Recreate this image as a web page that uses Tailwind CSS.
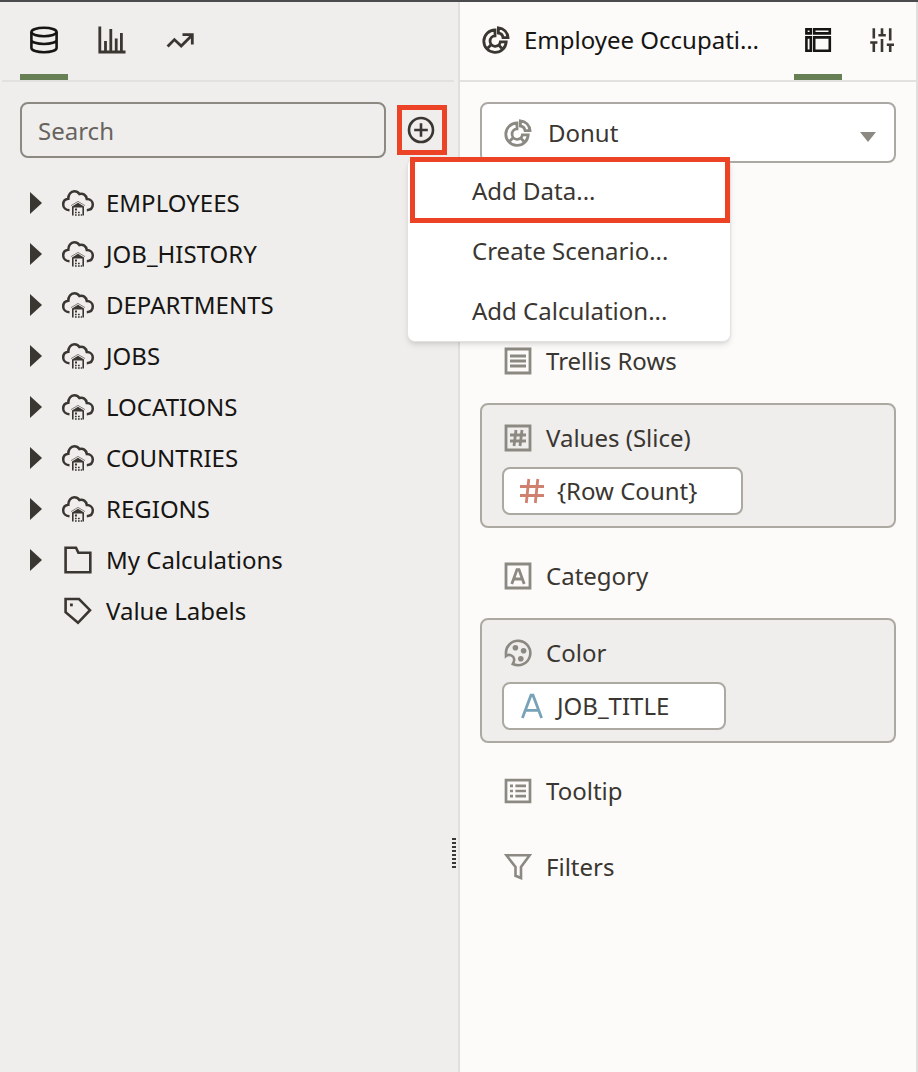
<!DOCTYPE html>
<html lang="en">
<head>
<meta charset="utf-8">
<title>Employee Occupations</title>
<script src="https://cdn.jsdelivr.net/npm/@tailwindcss/browser@4"></script>
</head>
<body class="min-h-screen bg-[#fcfbf9] text-[#161513] text-[24px] leading-8 font-['Noto_Sans','Open_Sans',sans-serif]">

<svg class="hidden" aria-hidden="true">
  <symbol id="donut" viewBox="0 0 28 28">
    <g fill="none" stroke="currentColor" stroke-width="2.8">
      <path d="M13 4A11.200 11.200 0 1 0 24.200 15.800H18.400A5.200 5.200 0 1 1 13 9.900Z"/>
      <path d="M16.400 1.800A10.300 10.300 0 0 1 26 11.600H21A5.400 5.400 0 0 0 16.400 7Z"/>
      <path d="M5.600 22.200 9.400 18.400M16.400 18.800 20 22.400"/>
    </g>
  </symbol>
  <symbol id="cloud" viewBox="0 0 34 28">
    <path d="M8.500 21.200C4.500 21 2.200 18.400 2.200 15.400C2.200 12.400 4.300 10.200 7.300 9.800C7.200 5.500 9.800 2.300 13.300 2.300C15.600 2.300 17.200 3.300 18.400 5C22 4 25.300 6 25.800 10C29.300 10 31.800 12.300 31.800 15.500C31.800 18.600 29.600 21 25.800 21.200" fill="none" stroke="currentColor" stroke-width="2.500"/>
    <path d="M10 16.600 17 12.400 24 16.600" fill="none" stroke="currentColor" stroke-width="1" stroke-opacity=".6"/>
    <path d="M11 17.400 17 13.800 23 17.400V26.500H21.400V18.400H12.600V26.500H11Z" fill="currentColor"/>
    <path d="M14 19.500h2v2h-2zM14 22.700h1.700v1.500h-1.700zM17 22.700h1.700v1.500H17zM14 25.200h1.700v1.500h-1.700zM17 25.200h1.700v1.500H17zM19.700 25.200h1.300v1.500h-1.300z" fill="currentColor"/>
  </symbol>
</svg>

<div class="flex min-h-screen border-t-2 border-[#4b4a4d]">

  <aside class="relative flex w-1/2 max-w-[460px] shrink-0 grow flex-col border-r-2 border-[#e1dfdd] bg-[#efeeec]">
    <nav class="mr-1 ml-0.5 flex h-20 items-stretch gap-5 border-b-2 border-[#e3e1df] pl-[18px]">
      <button aria-label="Data" class="flex w-12 justify-center border-b-[6px] border-[#677f54] pt-[6px]">
        <svg class="mt-[18px] size-7" viewBox="0 0 28 28" fill="none" stroke="currentColor" stroke-width="2.600"><ellipse cx="14" cy="6" rx="12.600" ry="4.200"/><path d="M1.400 6V22C1.400 24.400 7 26.200 14 26.200S26.600 24.400 26.600 22V6M1.400 14C1.400 16.300 7 18 14 18S26.600 16.300 26.600 14"/></svg>
      </button>
      <button aria-label="Visualizations" class="flex w-12 justify-center pt-6 text-[#3a3631]">
        <svg class="size-7" viewBox="0 0 28 28" fill="none" stroke="currentColor" stroke-width="2.800"><path d="M1.800 .5V26H27.500M7.500 26V15M12.800 26V3M18.200 26V12.500M23.400 26V7"/></svg>
      </button>
      <button aria-label="Analytics" class="flex w-12 justify-center pt-6 text-[#3a3631]">
        <svg class="size-7" viewBox="0 0 28 28" fill="none" stroke="currentColor" stroke-width="2.800"><path d="M1.600 20.600 8.400 13.600 15.200 20.100 25.500 9.800M16.500 8.600H26.300V18.400"/></svg>
      </button>
    </nav>

    <div class="mt-5 flex items-center pr-[11px] pl-5">
      <input type="text" aria-label="Search" placeholder="Search" class="h-14 min-w-0 flex-1 rounded-lg border-2 border-[#8b8982] bg-transparent px-4 placeholder:text-[#67645f]">
      <div class="relative ml-[11px]">
        <button aria-label="Add" class="flex size-[50px] items-center justify-center border-[5px] border-[#ec4226] pr-0.5 text-[#3a3631]">
          <svg class="size-7" viewBox="0 0 28 28" fill="none" stroke="currentColor" stroke-width="2.600"><circle cx="14" cy="14" r="12"/><path d="M14 7.200V20.800M7.200 14H20.800"/></svg>
        </button>
        <div role="menu" class="absolute top-[53px] left-[10px] z-10 w-[324px] rounded-lg border border-t-0 border-[#e4e2e0] bg-white pt-[3px] text-[#3a3631] shadow-md">
          <button role="menuitem" class="block h-[60px] w-full pl-16 text-left">Add Data...</button>
          <button role="menuitem" class="block h-[60px] w-full pl-16 text-left">Create Scenario...</button>
          <button role="menuitem" class="block h-[60px] w-full pl-16 text-left">Add Calculation...</button>
          <span class="pointer-events-none absolute -top-px right-0 left-0.5 h-[66px] border-[5px] border-[#ec4226]"></span>
        </div>
      </div>
    </div>

    <ul class="mt-[19px] pl-[30px] [&_li]:flex [&_li]:h-[51px] [&_li]:items-center [&_button]:flex [&_button]:items-center">
      <li><button><svg class="mr-[19px] h-[22px] w-3 text-[#3a3631]" viewBox="0 0 12 22"><path d="M0 0 12 11 0 22Z" fill="currentColor"/></svg><svg class="mr-[11px] h-7 w-[34px] text-[#3a3631]"><use href="#cloud"/></svg>EMPLOYEES</button></li>
      <li><button><svg class="mr-[19px] h-[22px] w-3 text-[#3a3631]" viewBox="0 0 12 22"><path d="M0 0 12 11 0 22Z" fill="currentColor"/></svg><svg class="mr-[11px] h-7 w-[34px] text-[#3a3631]"><use href="#cloud"/></svg>JOB_HISTORY</button></li>
      <li><button><svg class="mr-[19px] h-[22px] w-3 text-[#3a3631]" viewBox="0 0 12 22"><path d="M0 0 12 11 0 22Z" fill="currentColor"/></svg><svg class="mr-[11px] h-7 w-[34px] text-[#3a3631]"><use href="#cloud"/></svg>DEPARTMENTS</button></li>
      <li><button><svg class="mr-[19px] h-[22px] w-3 text-[#3a3631]" viewBox="0 0 12 22"><path d="M0 0 12 11 0 22Z" fill="currentColor"/></svg><svg class="mr-[11px] h-7 w-[34px] text-[#3a3631]"><use href="#cloud"/></svg>JOBS</button></li>
      <li><button><svg class="mr-[19px] h-[22px] w-3 text-[#3a3631]" viewBox="0 0 12 22"><path d="M0 0 12 11 0 22Z" fill="currentColor"/></svg><svg class="mr-[11px] h-7 w-[34px] text-[#3a3631]"><use href="#cloud"/></svg>LOCATIONS</button></li>
      <li><button><svg class="mr-[19px] h-[22px] w-3 text-[#3a3631]" viewBox="0 0 12 22"><path d="M0 0 12 11 0 22Z" fill="currentColor"/></svg><svg class="mr-[11px] h-7 w-[34px] text-[#3a3631]"><use href="#cloud"/></svg>COUNTRIES</button></li>
      <li><button><svg class="mr-[19px] h-[22px] w-3 text-[#3a3631]" viewBox="0 0 12 22"><path d="M0 0 12 11 0 22Z" fill="currentColor"/></svg><svg class="mr-[11px] h-7 w-[34px] text-[#3a3631]"><use href="#cloud"/></svg>REGIONS</button></li>
      <li><button><svg class="mr-[19px] h-[22px] w-3 text-[#3a3631]" viewBox="0 0 12 22"><path d="M0 0 12 11 0 22Z" fill="currentColor"/></svg><svg class="mr-[11px] h-7 w-[34px] text-[#3a3631]" viewBox="0 0 34 28"><path d="M4.600 1.800H15L17.400 6.800H29.300V26.200H4.600Z" fill="none" stroke="currentColor" stroke-width="2.600"/></svg>My Calculations</button></li>
      <li><button class="pl-[31px]"><svg class="mr-[11px] h-7 w-[34px] text-[#3a3631]" viewBox="0 0 34 28"><path d="M4.600 2H18L29 13.200 17 25.800 4.600 15.200Z" fill="none" stroke="currentColor" stroke-width="2.600"/><path d="M9 6.500h2.800v2.800H9z" fill="currentColor"/></svg>Value Labels</button></li>
    </ul>

    <div role="separator" aria-orientation="vertical" aria-label="Resize" class="absolute right-0.5 top-[836px] flex w-1 flex-col gap-0.5 [&_i]:h-0.5 [&_i]:bg-[#3a3631]"><i></i><i></i><i></i><i></i><i></i><i></i><i></i><i></i></div>
  </aside>

  <main class="flex min-w-0 flex-1 flex-col border-r-2 border-[#e1dfdd] text-[#3a3631]">
    <header class="flex h-20 border-b-2 border-[#e3e1df] pr-[10px] pl-[22px]">
      <svg class="mt-6 size-7 shrink-0"><use href="#donut"/></svg>
      <h1 class="mt-[22px] ml-[14px] flex-1 whitespace-nowrap text-[#161513]">Employee Occupati…</h1>
      <button aria-label="Grammar" class="flex w-12 shrink-0 justify-center border-b-[6px] border-[#677f54] pt-6 text-[#161513]">
        <svg class="size-7" viewBox="0 0 28 28" fill="none" stroke="currentColor" stroke-width="2.600"><path d="M2.400 3.200H6.800V7.400H2.400ZM10.200 3.200H25.800V7.400H10.200ZM2.400 11.400H6.800V24.800H2.400ZM10.200 11.400H25.800V24.800H10.200Z"/></svg>
      </button>
      <button aria-label="Properties" class="ml-4 flex w-12 shrink-0 justify-center pt-6">
        <svg class="size-7" viewBox="0 0 28 28" fill="none" stroke="currentColor" stroke-width="2.600"><path d="M5.800 2.200V12.500M5.800 16.500V26M2.200 16.500H9.400M14 2.200V9.300M10.400 9.300H17.800M14 13V26M22.200 2.200V14.500M18.800 18.700H26M22.200 18.700V26"/></svg>
      </button>
    </header>

    <div class="flex flex-col pt-5 pr-5 pl-5">
      <div class="relative">
        <select aria-label="Visualization type" class="block h-[61px] w-full appearance-none rounded-lg border-2 border-[#aca8a3] bg-white pl-[66px]"><option>Donut</option></select>
        <svg class="pointer-events-none absolute top-[17px] left-6 size-7 text-[#8b8982]"><use href="#donut"/></svg>
        <svg class="pointer-events-none absolute top-[30px] right-5 h-[10px] w-4" viewBox="0 0 16 10"><path d="M0 0H16L8 10Z" fill="#8b8982"/></svg>
      </div>

      <section class="mt-40 flex h-[76px] items-center gap-[14px] pl-6">
        <svg class="size-7 text-[#8b8982]" viewBox="0 0 28 28" fill="none" stroke="currentColor" stroke-width="2.800"><path d="M2 2H26V26H2ZM6 9H22M6 14H22M6 19H22"/></svg>
        <h2>Trellis Rows</h2>
      </section>

      <section class="mt-1 mb-[10px] rounded-lg border-2 border-[#aca9a2] bg-[#efeeec] pt-1 pb-[11px] pl-5">
        <div class="flex h-[58px] items-center gap-[14px] pl-0.5">
          <svg class="size-7 text-[#8b8982]" viewBox="0 0 28 28" fill="none" stroke="currentColor" stroke-width="2.800"><path d="M2 2H26V26H2ZM6 11H22M6 17H22M12 6 10 22M18 6 16 22"/></svg>
          <h2>Values (Slice)</h2>
        </div>
        <button class="flex h-12 w-[241px] items-center gap-3 rounded-lg border-2 border-[#aca9a2] bg-white pl-[15px]">
          <svg class="size-[26px] shrink-0 text-[#cf806e]" viewBox="0 0 26 26" fill="none" stroke="currentColor" stroke-width="2.800"><path d="M1 8.500H25M1 17.500H25M9.800 1 7.300 25M18.800 1 16.300 25"/></svg>{Row Count}
        </button>
      </section>

      <section class="flex h-[76px] items-center gap-[14px] pl-6">
        <svg class="size-7 text-[#8b8982]" viewBox="0 0 28 28" fill="none" stroke="currentColor" stroke-width="2.800"><path d="M2 2H26V26H2Z"/><path d="M7.800 22 13 7.600H15L20.200 22M10 17H18"/></svg>
        <h2>Category</h2>
      </section>

      <section class="mt-1 mb-[10px] rounded-lg border-2 border-[#aca9a2] bg-[#efeeec] pt-1 pb-[11px] pl-5">
        <div class="flex h-[58px] items-center gap-[14px] pl-0.5">
          <svg class="size-7 text-[#8b8982]" viewBox="0 0 28 28"><path d="M2 15.300A12.200 12.200 0 1 1 8.800 25C11 21.300 10.600 17.800 7.200 16.400C5.500 15.700 3.700 15.700 2 17Z" fill="none" stroke="currentColor" stroke-width="2.600"/><g fill="currentColor"><circle cx="11.400" cy="8.800" r="2.800"/><circle cx="19.600" cy="11.800" r="2.800"/><circle cx="16.800" cy="19.800" r="2.800"/></g></svg>
          <h2>Color</h2>
        </div>
        <button class="flex h-12 w-[224px] items-center gap-3 rounded-lg border-2 border-[#aca9a2] bg-white pl-[15px]">
          <svg class="size-[26px] shrink-0 text-[#78a2b8]" viewBox="0 0 26 26" fill="none" stroke="currentColor" stroke-width="2.800"><path d="M3.400 25 12 2.200H14L22.600 25M6.400 17.400H19.600"/></svg>JOB_TITLE
        </button>
      </section>

      <section class="flex h-[76px] items-center gap-[14px] pl-6">
        <svg class="size-7 text-[#8b8982]" viewBox="0 0 28 28" fill="none" stroke="currentColor" stroke-width="2.700"><path d="M2 3.200H26V24.800H2ZM6 8.800H9M6 14H9M6 19.200H9M11.400 8.800H22M11.400 14H22M11.400 19.200H22"/></svg>
        <h2>Tooltip</h2>
      </section>
      <section class="flex h-[76px] items-center gap-[14px] pl-6">
        <svg class="size-7 text-[#8b8982]" viewBox="0 0 28 28" fill="none" stroke="currentColor" stroke-width="2.600"><path d="M2.300 2.200H25.700L17 14V25L11.500 22.800V14Z"/></svg>
        <h2>Filters</h2>
      </section>
    </div>
  </main>
</div>
</body>
</html>
